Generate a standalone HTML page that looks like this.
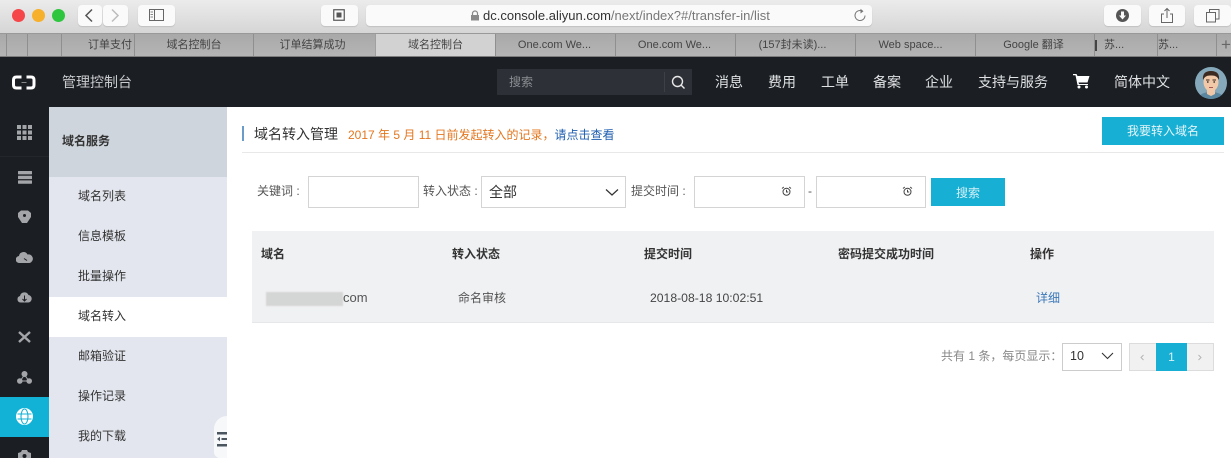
<!DOCTYPE html>
<html><head><meta charset="utf-8">
<style>
html,body{margin:0;padding:0}
body{width:1231px;height:458px;overflow:hidden;position:relative;background:#fff;font-family:"Liberation Sans","Noto Sans CJK SC",sans-serif;color:#333}
#w{position:absolute;left:0;top:0;width:1231px;height:458px;overflow:hidden;filter:blur(.35px)}
.a{position:absolute;box-sizing:border-box}
.t{position:absolute;white-space:nowrap;line-height:20px}
.btn{position:absolute;box-sizing:border-box;background:#fafafa;border-radius:4px;box-shadow:0 1px 1px rgba(0,0,0,.12)}
.tab{position:absolute;top:34px;height:22px;line-height:23px;font-size:11px;color:#444;text-align:center;white-space:nowrap;border-left:1px solid #8f8f8f;box-sizing:border-box}
.nav{position:absolute;top:72px;font-size:14px;line-height:20px;color:#dfe1e3;white-space:nowrap}
.menu{position:absolute;left:78px;font-size:12px;line-height:20px;color:#333;white-space:nowrap}
.th{position:absolute;top:244px;font-size:12px;font-weight:bold;line-height:20px;color:#333;white-space:nowrap}
.inp{position:absolute;box-sizing:border-box;background:#fff;border:1px solid #d4d4d4;height:32px;top:176px}
.lab{position:absolute;top:181px;font-size:12px;line-height:20px;color:#555;white-space:nowrap}
svg{position:absolute;display:block}
</style></head><body><div id="w">

<!-- Browser toolbar -->
<div class="a" style="left:0;top:0;width:1231px;height:33px;background:linear-gradient(#ebebeb,#d5d5d5)"></div>
<div class="a" style="left:12px;top:9px;width:13px;height:13px;border-radius:50%;background:#f5474a"></div>
<div class="a" style="left:32px;top:9px;width:13px;height:13px;border-radius:50%;background:#f7b02b"></div>
<div class="a" style="left:52px;top:9px;width:13px;height:13px;border-radius:50%;background:#2fc63f"></div>

<div class="btn" style="left:78px;top:5px;width:24px;height:21px"></div>
<div class="btn" style="left:103px;top:5px;width:25px;height:21px"></div>
<svg style="left:78px;top:5px" width="50" height="21" fill="none"><path d="M14 4.500L8 10.500L14 16.500" stroke="#555" stroke-width="1.500"/><path d="M34 4.500L40 10.500L34 16.500" stroke="#bdbdbd" stroke-width="1.500"/></svg>

<div class="btn" style="left:138px;top:5px;width:37px;height:21px"></div>
<svg style="left:149px;top:9px" width="16" height="13" fill="none" stroke="#666"><rect x=".5" y=".5" width="14" height="11"/><path d="M5.500 .5V11.500"/><path d="M1.500 3H4M1.500 5.500H4M1.500 8H4" stroke="#888"/></svg>

<div class="btn" style="left:321px;top:5px;width:37px;height:21px"></div>
<svg style="left:333px;top:9px" width="13" height="13"><rect x=".75" y=".75" width="10.500" height="10.500" fill="none" stroke="#555" stroke-width="1.200"/><rect x="3.500" y="3.500" width="5" height="5" fill="#555"/></svg>

<div class="btn" style="left:366px;top:5px;width:506px;height:21px"></div>
<svg style="left:470px;top:10px" width="10" height="11"><path d="M2.500 5V3.500a2.500 2.500 0 0 1 5 0V5" fill="none" stroke="#8a8a8a" stroke-width="1.200"/><rect x="1" y="5" width="8" height="5.500" fill="#8a8a8a"/></svg>
<div class="t" style="left:483px;top:6px;font-size:13px;color:#333">dc.console.aliyun.com<span style="color:#777">/next/index?#/transfer-in/list</span></div>
<svg style="left:853px;top:8px" width="14" height="15" fill="none"><path d="M9.500 3.200A5 5 0 1 0 12 7.500" stroke="#777" stroke-width="1"/><path d="M7.500 .8L10.500 3.200L7.500 5.500Z" fill="#777"/></svg>

<div class="btn" style="left:1104px;top:5px;width:37px;height:21px"></div>
<svg style="left:1115px;top:8px" width="15" height="15"><circle cx="7.500" cy="7.500" r="6.500" fill="#555"/><path d="M6 3.500H9V7.500H11L7.500 11.500L4 7.500H6Z" fill="#fafafa"/></svg>
<div class="btn" style="left:1149px;top:5px;width:36px;height:21px"></div>
<svg style="left:1160px;top:7px" width="14" height="17" fill="none" stroke="#666"><path d="M4 7H1.500V15.500H12.500V7H10"/><path d="M7 11V1.500M4.500 4L7 1.500L9.500 4"/></svg>
<div class="btn" style="left:1194px;top:5px;width:37px;height:21px"></div>
<svg style="left:1206px;top:9px" width="14" height="14" fill="none" stroke="#666"><rect x=".5" y="3.500" width="9" height="9.500"/><path d="M3.500 3.500V.5H13V10H9.500"/></svg>

<!-- Tabs -->
<div class="a" style="left:0;top:33px;width:1231px;height:24px;background:linear-gradient(#a9a9a9,#b5b5b5);border-top:1px solid #999;border-bottom:1px solid #7d7d7d"></div>
<div class="tab" style="left:6px;width:21px"></div>
<div class="tab" style="left:27px;width:34px"></div>
<div class="tab" style="left:61px;width:73px;padding-left:26px;text-align:left;">订单支付</div>
<div class="tab" style="left:134px;width:119px">域名控制台</div>
<div class="tab" style="left:253px;width:122px;padding-right:4px">订单结算成功</div>
<div class="tab" style="left:375px;width:120px;background:#d2d2d2;border-left:1px solid #a0a0a0;color:#444">域名控制台</div>
<div class="tab" style="left:495px;width:120px;padding-right:2px">One.com We...</div>
<div class="tab" style="left:615px;width:120px;padding-right:2px">One.com We...</div>
<div class="tab" style="left:735px;width:120px;padding-right:6px">(157封未读)...</div>
<div class="tab" style="left:855px;width:120px;padding-right:10px">Web space...</div>
<div class="tab" style="left:975px;width:119px;padding-right:3px">Google 翻译</div>
<div class="tab" style="left:1094px;width:63px;padding-left:9px;text-align:left"><span class="a" style="left:0;top:6px;width:2px;height:11px;background:#444"></span>苏...</div>
<div class="tab" style="left:1157px;width:59px;text-align:left;">苏...</div>
<div class="tab" style="left:1216px;width:15px;font-size:17px;color:#666;line-height:22px;padding-left:4px">+</div>

<!-- Top nav -->
<div class="a" style="left:0;top:57px;width:1231px;height:50px;background:#1b1e23"></div>
<svg style="left:12px;top:75px" width="24" height="15" fill="none" stroke="#fff" stroke-width="3"><path d="M9.500 2H4.500Q1.500 2 1.500 5V10Q1.500 13 4.500 13H9.500"/><path d="M14.500 2H19Q22 2 22 5V10Q22 13 19 13H14.500"/><path d="M9.500 7.500H14.500" stroke-width="1" stroke="#888"/></svg>
<div class="t" style="left:62px;top:72px;font-size:14px;color:#c9cbce">管理控制台</div>

<div class="a" style="left:497px;top:69px;width:195px;height:26px;background:#2d3137"></div>
<div class="t" style="left:509px;top:72px;font-size:12px;color:#8a8d91">搜索</div>
<div class="a" style="left:664px;top:72px;width:1px;height:20px;background:#3d4146"></div>
<svg style="left:671px;top:75px" width="15" height="15" fill="none" stroke="#e8e8e8" stroke-width="1.400"><circle cx="6.500" cy="6.500" r="5"/><path d="M10 10L13.500 13.500"/></svg>

<div class="nav" style="left:715px">消息</div>
<div class="nav" style="left:768px">费用</div>
<div class="nav" style="left:821px">工单</div>
<div class="nav" style="left:873px">备案</div>
<div class="nav" style="left:925px">企业</div>
<div class="nav" style="left:978px">支持与服务</div>
<svg style="left:1073px;top:74px" width="17" height="15" fill="#fff"><path d="M0 0H3.500L4.500 2H16.500L14.500 8.500H5.500L6 10H15V11H4.500L2.500 1.200H0Z"/><circle cx="6" cy="13" r="1.500"/><circle cx="13.500" cy="13" r="1.500"/></svg>
<div class="nav" style="left:1114px">简体中文</div>
<svg style="left:1195px;top:67px" width="32" height="32"><defs><clipPath id="c"><circle cx="16" cy="16" r="16"/></clipPath></defs><g clip-path="url(#c)"><rect width="32" height="32" fill="#85a9bb"/><path d="M3 32Q5 25 16 25Q27 25 29 32Z" fill="#5b86a0"/><path d="M12 22H20V27L16 29L12 27Z" fill="#f0c8a8"/><ellipse cx="16" cy="15" rx="7.500" ry="9.500" fill="#f2c9a8"/><path d="M8 13Q7 4 16 4Q25 4 24 13Q22 8 16 8.500Q10 8 8 13Z" fill="#3c2a20"/><path d="M11 13H14.500M17.500 13H21" stroke="#3c2a20"/><circle cx="12.800" cy="15" r=".9" fill="#333"/><circle cx="19.200" cy="15" r=".9" fill="#333"/><path d="M14 20.500H18" stroke="#a55" /></g></svg>

<!-- Icon rail -->
<div class="a" style="left:0;top:107px;width:49px;height:351px;background:#1b1e23"></div>
<div class="a" style="left:0;top:156px;width:49px;height:1px;background:#23272c"></div>
<svg style="left:17px;top:125px" width="15" height="15" fill="#a3a5a8"><rect width="4" height="4"/><rect x="5.500" width="4" height="4"/><rect x="11" width="4" height="4"/><rect y="5.500" width="4" height="4"/><rect x="5.500" y="5.500" width="4" height="4"/><rect x="11" y="5.500" width="4" height="4"/><rect y="11" width="4" height="4"/><rect x="5.500" y="11" width="4" height="4"/><rect x="11" y="11" width="4" height="4"/></svg>
<svg style="left:18px;top:171px" width="14" height="13" fill="#a3a5a8"><rect width="14" height="3.400" rx=".5"/><rect y="4.700" width="14" height="3.400" rx=".5"/><rect y="9.400" width="14" height="3.400" rx=".5"/></svg>
<svg style="left:17px;top:210px" width="15" height="14"><path d="M1 3L4 .5H11L14 3V7L10 13H5L1 7Z" fill="#a3a5a8"/><circle cx="7.500" cy="5.500" r="1.500" fill="#1b1e23"/></svg>
<svg style="left:16px;top:251px" width="17" height="12" fill="#a3a5a8"><path d="M3.500 12A3.500 3.500 0 0 1 3 5A4.500 4.500 0 0 1 11.500 3.500A3.800 3.800 0 0 1 13.500 12Z"/><path d="M8 7.500L11 9.500" stroke="#1b1e23"/></svg>
<svg style="left:17px;top:291px" width="15" height="12"><path d="M3.500 11.500A3.300 3.300 0 0 1 3 5A4.500 4.500 0 0 1 11.500 4A3.800 3.800 0 0 1 11.500 11.500Z" fill="#a3a5a8"/><path d="M7.500 4.500V10M5.500 8L7.500 10L9.500 8" stroke="#1b1e23" fill="none"/></svg>
<svg style="left:18px;top:331px" width="13" height="12" fill="none" stroke="#a3a5a8" stroke-width="2.400"><path d="M1 1L12 11M12 1L1 11"/></svg>
<svg style="left:17px;top:371px" width="15" height="13" fill="#a3a5a8"><circle cx="7.500" cy="3" r="3"/><circle cx="2.800" cy="10" r="2.800"/><circle cx="12.200" cy="10" r="2.800"/><path d="M7.500 4L3 10H12Z" fill="none" stroke="#a3a5a8"/></svg>
<div class="a" style="left:0;top:397px;width:49px;height:40px;background:#12b2d6"></div>
<svg style="left:16px;top:408px" width="17" height="17" fill="#fff" stroke="none"><circle cx="8.500" cy="8.500" r="8.500"/><g fill="none" stroke="#12b2d6" stroke-width="1.100"><ellipse cx="8.500" cy="8.500" rx="3.500" ry="7.500"/><path d="M1.500 6H15.500M1.500 11H15.500"/></g></svg>
<svg style="left:17px;top:449px" width="15" height="9"><path d="M5 1H10L11 3L14 4V9H1V4L4 3Z" fill="#a3a5a8"/><circle cx="7.500" cy="7" r="2" fill="#1b1e23"/></svg>

<!-- Secondary sidebar -->
<div class="a" style="left:49px;top:107px;width:178px;height:351px;background:#e3e6ee"></div>
<div class="a" style="left:49px;top:107px;width:178px;height:70px;background:#cfd5dd"></div>
<div class="t" style="left:62px;top:131px;font-size:12px;font-weight:bold;color:#333">域名服务</div>
<div class="a" style="left:49px;top:297px;width:178px;height:40px;background:#fff"></div>
<div class="menu" style="top:186px">域名列表</div>
<div class="menu" style="top:226px">信息模板</div>
<div class="menu" style="top:266px">批量操作</div>
<div class="menu" style="top:306px">域名转入</div>
<div class="menu" style="top:346px">邮箱验证</div>
<div class="menu" style="top:386px">操作记录</div>
<div class="menu" style="top:426px">我的下载</div>
<div class="a" style="left:214px;top:416px;width:13px;height:42px;background:#f7f8fa;border-radius:13px 0 0 6px"></div>
<svg style="left:217px;top:432px" width="11" height="15" fill="#4a5560"><rect width="10" height="2.500"/><rect x="4.500" y="6" width="5.500" height="2"/><rect y="12" width="10" height="2.500"/><path d="M0 7L3 4.800V9.200Z"/></svg>

<!-- Title -->
<div class="a" style="left:242px;top:126px;width:2px;height:15px;background:#6a9bc9"></div>
<div class="t" style="left:254px;top:124px;font-size:14px;color:#333">域名转入管理</div>
<div class="t" style="left:348px;top:125px;font-size:12px;color:#e3761f">2017 年 5 月 11 日前发起转入的记录，<span style="color:#1f5fb0">请点击查看</span></div>
<div class="a" style="left:1102px;top:117px;width:122px;height:28px;background:#17afd3;color:#e4f5fa;font-size:12px;line-height:29px;text-align:center">我要转入域名</div>
<div class="a" style="left:242px;top:152px;width:982px;height:1px;background:#e8e8e8"></div>

<!-- Filters -->
<div class="lab" style="left:257px">关键词&nbsp;:</div>
<div class="inp" style="left:308px;width:111px"></div>
<div class="lab" style="left:423px">转入状态&nbsp;:</div>
<div class="inp" style="left:481px;width:145px"></div>
<div class="t" style="left:489px;top:182px;font-size:14px;color:#333">全部</div>
<svg style="left:605px;top:188px" width="14" height="9" fill="none" stroke="#333" stroke-width="1.200"><path d="M1 1.500L7 7L13 1.500"/></svg>
<div class="lab" style="left:631px">提交时间&nbsp;:</div>
<div class="inp" style="left:694px;width:111px"></div>
<svg style="left:781px;top:186px" width="11" height="11" fill="none" stroke="#444"><circle cx="5.500" cy="5.800" r="3.500"/><path d="M5.500 3.800V6H7.200M1 2.500L2.800 1M10 2.500L8.200 1"/></svg>
<div class="lab" style="left:808px">-</div>
<div class="inp" style="left:816px;width:110px"></div>
<svg style="left:902px;top:186px" width="11" height="11" fill="none" stroke="#444"><circle cx="5.500" cy="5.800" r="3.500"/><path d="M5.500 3.800V6H7.200M1 2.500L2.800 1M10 2.500L8.200 1"/></svg>
<div class="a" style="left:931px;top:178px;width:74px;height:28px;background:#17afd3;color:#d4f0f7;font-size:12px;line-height:30px;text-align:center">搜索</div>

<!-- Table -->
<div class="a" style="left:252px;top:231px;width:962px;height:92px;background:#f0f1f3;border-bottom:1px solid #e6e7e9"></div>
<div class="th" style="left:261px">域名</div>
<div class="th" style="left:452px">转入状态</div>
<div class="th" style="left:644px">提交时间</div>
<div class="th" style="left:838px">密码提交成功时间</div>
<div class="th" style="left:1030px">操作</div>
<div class="a" style="left:266px;top:292px;width:77px;height:14px;background:#d4d5d5;filter:blur(.8px)"></div>
<div class="t" style="left:343px;top:288px;font-size:13px;color:#555">com</div>
<div class="t" style="left:458px;top:288px;font-size:12px;color:#555">命名审核</div>
<div class="t" style="left:650px;top:288px;font-size:12.200px;color:#444">2018-08-18 10:02:51</div>
<div class="t" style="left:1036px;top:288px;font-size:12px;color:#3a78b8">详细</div>

<!-- Pagination -->
<div class="t" style="left:941px;top:346px;font-size:12px;color:#888">共有 1 条，每页显示：</div>
<div class="a" style="left:1062px;top:343px;width:60px;height:28px;background:#fff;border:1px solid #ccc"></div>
<div class="t" style="left:1070px;top:346px;font-size:12.500px;color:#333">10</div>
<svg style="left:1101px;top:352px" width="13" height="8" fill="none" stroke="#333" stroke-width="1.100"><path d="M1 1L6.500 6.500L12 1"/></svg>
<div class="a" style="left:1129px;top:343px;width:85px;height:28px;background:#f1f1f2;border:1px solid #dcdcdc"></div>
<div class="a" style="left:1156px;top:343px;width:31px;height:28px;background:#17afd3;color:#d8f2f8;font-size:12px;line-height:29px;text-align:center">1</div>
<svg style="left:1140px;top:354px" width="5" height="7" fill="none" stroke="#b5b5b5"><path d="M3.500 1L1 3.500L3.500 6"/></svg>
<svg style="left:1197px;top:354px" width="5" height="7" fill="none" stroke="#b5b5b5"><path d="M1.500 1L4 3.500L1.500 6"/></svg>

</div></body></html>
